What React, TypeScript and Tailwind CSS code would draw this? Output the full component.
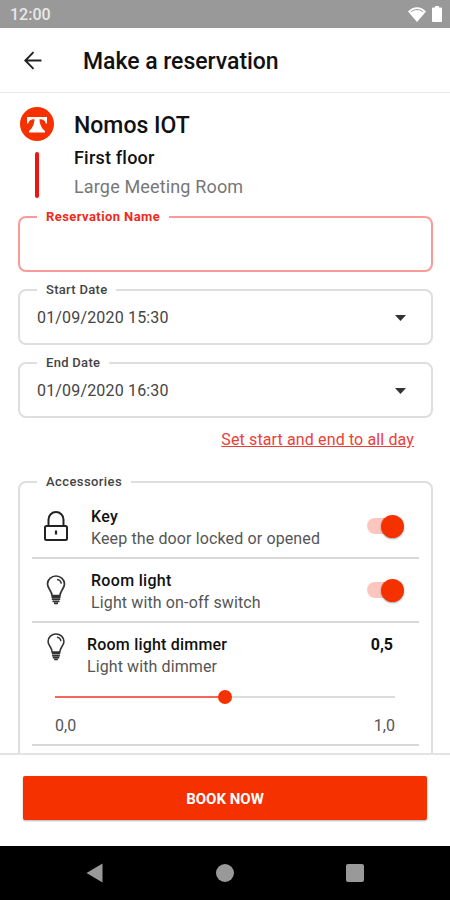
import type { ReactNode } from "react";

const LockIcon = () => (
  <svg width="26" height="32" viewBox="0 0 26 32" fill="none" stroke="#222" strokeWidth="2">
    <rect x="2" y="16" width="22" height="14" rx="1.500" />
    <path d="M5.500 16V9.500a7.500 7.500 0 0 1 15 0V16" />
    <path d="M13 20.500v4" strokeWidth="2.200" />
  </svg>
);

const BulbIcon = ({ className }: { className?: string }) => (
  <svg className={className} width="20" height="30" viewBox="0 0 20 30" fill="none" stroke="#333" strokeWidth="1.700">
    <path d="M6 20.500C6 16 1.500 13.500 1.500 9a8.500 8 0 0 1 17 0c0 4.500-4.500 7-4.500 11.500z" />
    <path d="M11 4.500c2.500.3 4 1.800 4.300 4.200" strokeWidth="1.500" />
    <path d="M5.500 22h9M5.800 24.200h8.400M6.500 26.400h7M8 28.400h4" strokeWidth="1.800" />
  </svg>
);

const Field = ({ label, children }: { label: string; children?: ReactNode }) => (
  <fieldset className="h-[64px] rounded-lg border-2 border-[#dedede] pl-[17px] pr-[25px]">
    <legend className="px-[9px] text-[13px] leading-[18px] tracking-[0.3px] font-medium text-[#444]">{label}</legend>
    <div className="flex h-[37px] items-center justify-between text-[16px] tracking-[0.17px] text-[#444]">
      {children}
      <svg width="11" height="6" viewBox="0 0 11 6" fill="#333">
        <path d="M0 0h11L5.500 6z" />
      </svg>
    </div>
  </fieldset>
);

const Switch = () => (
  <div className="flex w-[38px] items-center">
    <div className="h-4 w-[26px] rounded-full bg-[#fcc5bd]" />
    <div className="-ml-3 size-[23px] shrink-0 rounded-full bg-[#f53100] shadow-[0_1px_2px_rgba(0,0,0,0.35)]" />
  </div>
);

const accessories = [
  { title: "Key", description: "Keep the door locked or opened", icon: <LockIcon /> },
  { title: "Room light", description: "Light with on-off switch", icon: <BulbIcon /> },
];

const App = () => {
  return (
    <div className="h-[900px] w-[450px] overflow-hidden bg-white font-['Roboto',sans-serif]">
      <div className="flex h-7 items-center justify-between bg-[#999] pr-[8px] pl-[10px] text-white">
        <span className="pt-[2px] text-[16px] leading-none font-medium text-[#e8e8e8]">12:00</span>
        <div className="flex items-center gap-[6px]">
          <svg width="18" height="15" viewBox="0 0 18 15" fill="#fff">
            <path d="M0 4.500C5-1.200 13-1.200 18 4.500L9 15z" />
            <path d="M2.800 4.800c4-3 8.400-3 12.400 0" fill="none" stroke="#999" strokeWidth="1" />
          </svg>
          <svg width="10" height="16" viewBox="0 0 10 16" fill="#fff">
            <path d="M3 0h4v1.500h2q1 0 1 1v12.500q0 1-1 1H1q-1 0-1-1V2.500q0-1 1-1h2z" />
          </svg>
        </div>
      </div>

      <header className="flex h-[65px] items-center border-b border-[#e8e8e8] pl-6">
        <svg width="18" height="19" viewBox="0 0 18 19" fill="none" stroke="#222" strokeWidth="1.900">
          <path d="M17.500 9.500H1.500M9.500 1.200L1.300 9.500l8.200 8.300" />
        </svg>
        <h1 className="ml-[41px] pt-[5px] text-[23px] font-medium tracking-[-0.03px] text-[#111]">Make a reservation</h1>
      </header>

      <main className="h-[660px] overflow-hidden pr-[17px] pl-[18px]">
        <div className="flex h-[115px] pt-[14px]">
          <div className="flex w-[38px] flex-col items-center">
            <svg width="34" height="34" viewBox="0 0 34 34">
              <circle cx="17" cy="17" r="17" fill="#f53100" />
              <path d="M7 10h20v6.500h-1.300c-.4-2.500-2-4-4.700-4.200h-1.500c.2 4.500 1.500 8.500 5.500 11.700V25.500H9V24c4-3.200 5.300-7.200 5.500-11.700H13c-2.700.2-4.300 1.700-4.700 4.200H7z" fill="#fff" />
            </svg>
            <div className="mt-[11px] h-[46px] w-1 rounded-full bg-[#ee1410]" />
          </div>
          <div className="ml-[18px]">
            <h2 className="text-[23px] leading-[37px] font-medium text-[#111]">Nomos IOT</h2>
            <p className="text-[18px] leading-[27px] font-medium tracking-[0.2px] text-[#111]">First floor</p>
            <p className="text-[18px] leading-[31px] tracking-[0.15px] text-[#777]">Large Meeting Room</p>
          </div>
        </div>

        <div className="flex flex-col gap-[9px]">
          <fieldset className="h-[64px] rounded-lg border-2 border-[#f79c97] pl-[17px]">
            <legend className="px-[9px] text-[13px] leading-[18px] font-bold tracking-[0.42px] text-[#ee2a20]">Reservation Name</legend>
          </fieldset>
          <Field label="Start Date">01/09/2020 15:30</Field>
          <Field label="End Date">01/09/2020 16:30</Field>
        </div>

        <p className="mt-[12px] mb-[23px] pr-[19px] text-right text-[16px] leading-[20px] tracking-[0.13px] text-[#ec4038] underline">
          Set start and end to all day
        </p>

        <fieldset className="h-[320px] rounded-lg border-2 border-[#dedede] px-[12px]">
          <legend className="ml-[5px] px-[9px] text-[13px] leading-[18px] font-medium tracking-[0.42px] text-[#444]">Accessories</legend>
          {accessories.map((item) => (
            <div key={item.title} className="flex h-[64px] items-center border-b-2 border-[#d8d8d8] pr-[14px] first-of-type:h-[68px] first-of-type:pt-[4px]">
              <div className="flex w-[47px] justify-center">{item.icon}</div>
              <div className="ml-[12px] flex-1 pt-[3px]">
                <h3 className="text-[16px] leading-[22px] font-medium tracking-[0.3px] text-[#111]">{item.title}</h3>
                <p className="text-[16px] leading-[22px] tracking-[0.13px] text-[#555]">{item.description}</p>
              </div>
              <Switch />
            </div>
          ))}

          <div className="h-[123px] border-b-2 border-[#d8d8d8]">
            <div className="flex pt-[10px] pr-[26px]">
              <BulbIcon className="ml-[14px] h-[28px]" />
              <div className="ml-[21px] flex-1 pt-px">
                <h3 className="text-[16px] leading-[22px] font-medium tracking-[0.2px] text-[#111]">Room light dimmer</h3>
                <p className="text-[16px] leading-[22px] tracking-[0.1px] text-[#555]">Light with dimmer</p>
              </div>
              <span className="pt-px text-[16px] leading-[22px] font-bold text-[#111]">0,5</span>
            </div>
            <div className="mt-[12px] mr-[24px] ml-[23px] flex items-center">
              <div className="h-[2px] w-1/2 bg-[#f8645a]" />
              <div className="relative -mx-[7px] size-[14px] shrink-0 rounded-full bg-[#f53100]" />
              <div className="h-[2px] w-1/2 bg-[#dcdcdc]" />
            </div>
            <div className="mt-[12px] mr-[24px] ml-[23px] flex justify-between text-[16px] leading-[20px] text-[#555]">
              <span>0,0</span>
              <span>1,0</span>
            </div>
          </div>
        </fieldset>
      </main>

      <footer className="h-[93px] border-t-2 border-[#e3e3e3] px-[23px] pt-[21px]">
        <button className="h-[44px] w-full rounded-[2px] bg-[#f53100] pt-[2px] text-[15px] font-bold text-white shadow-[0_1px_2px_rgba(0,0,0,0.3)]">
          BOOK NOW
        </button>
      </footer>

      <nav className="flex h-[54px] items-center justify-between bg-black pr-[86px] pl-[86px]">
        <svg width="18" height="20" viewBox="0 0 18 20" fill="#999">
          <path d="M0.500 10L16.500 0.500V19.500z" />
        </svg>
        <div className="size-[18px] rounded-full bg-[#999]" />
        <div className="size-[18px] rounded-[2px] bg-[#999]" />
      </nav>
    </div>
  );
};

export default App;
